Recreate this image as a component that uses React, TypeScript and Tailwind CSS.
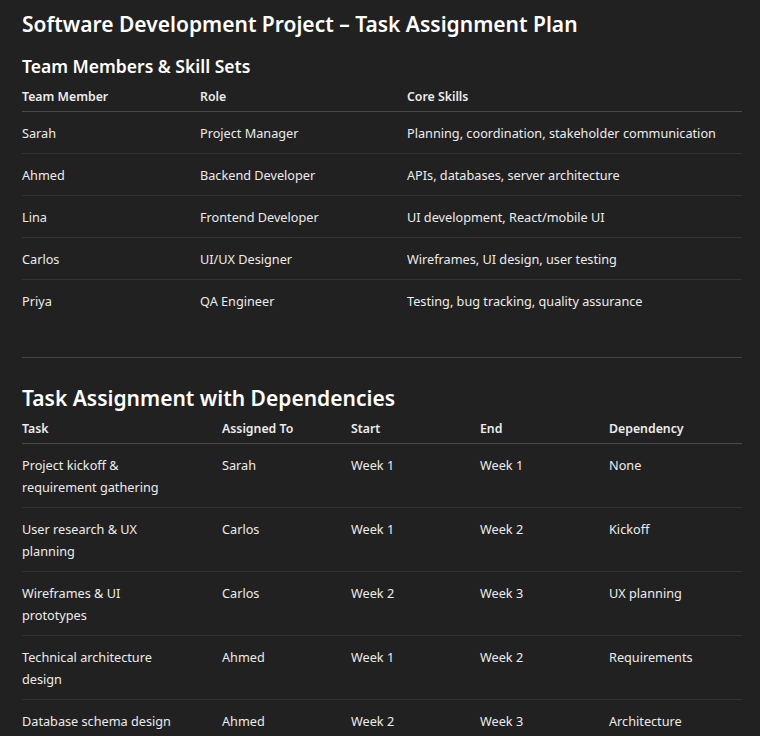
export default function App() {
  const team = [
    ["Sarah", "Project Manager", "Planning, coordination, stakeholder communication"],
    ["Ahmed", "Backend Developer", "APIs, databases, server architecture"],
    ["Lina", "Frontend Developer", "UI development, React/mobile UI"],
    ["Carlos", "UI/UX Designer", "Wireframes, UI design, user testing"],
    ["Priya", "QA Engineer", "Testing, bug tracking, quality assurance"],
  ];
  const tasks = [
    ["Project kickoff & requirement gathering", "Sarah", "Week 1", "Week 1", "None"],
    ["User research & UX planning", "Carlos", "Week 1", "Week 2", "Kickoff"],
    ["Wireframes & UI prototypes", "Carlos", "Week 2", "Week 3", "UX planning"],
    ["Technical architecture design", "Ahmed", "Week 1", "Week 2", "Requirements"],
    ["Database schema design", "Ahmed", "Week 2", "Week 3", "Architecture"],
    ["Frontend environment setup", "Lina", "Week 2", "Week 2", "Architecture"],
  ];
  return (
    <div className="min-h-[736px] bg-[#212121] text-[#ececec] px-[22px] pt-[8px] text-[12.7px] leading-[22px]" style={{ fontFamily: '"Noto Sans", sans-serif' }}>
      <h1 className="text-[21px] font-semibold leading-[32px] text-white">Software Development Project – Task Assignment Plan</h1>
      <h2 className="text-[17.5px] font-semibold leading-[28px] text-white mt-[12px]">Team Members &amp; Skill Sets</h2>
      <table className="w-[720px] mt-[6px] border-collapse table-fixed">
        <colgroup><col className="w-[178px]" /><col className="w-[207px]" /><col /></colgroup>
        <thead>
          <tr className="border-b border-[#4a4a4a] text-left text-[12.3px]">
            <th className="font-semibold pb-[3px] pt-0">Team Member</th>
            <th className="font-semibold pb-[3px]">Role</th>
            <th className="font-semibold pb-[3px]">Core Skills</th>
          </tr>
        </thead>
        <tbody>
          {team.map((r, i) => (
            <tr key={i} className={i < team.length - 1 ? "border-b border-[#333]" : ""}>
              {r.map((c, j) => <td key={j} className="py-[9.5px] align-top">{c}</td>)}
            </tr>
          ))}
        </tbody>
      </table>
      <div className="h-px bg-[#444] mt-[36px] w-[720px]" />
      <h2 className="text-[21px] font-semibold leading-[32px] text-white mt-[24px]">Task Assignment with Dependencies</h2>
      <table className="w-[720px] mt-[4px] border-collapse table-fixed">
        <colgroup><col className="w-[200px]" /><col className="w-[129px]" /><col className="w-[129px]" /><col className="w-[129px]" /><col /></colgroup>
        <thead>
          <tr className="border-b border-[#4a4a4a] text-left text-[12.3px]">
            <th className="font-semibold pb-[3px]">Task</th>
            <th className="font-semibold pb-[3px]">Assigned To</th>
            <th className="font-semibold pb-[3px]">Start</th>
            <th className="font-semibold pb-[3px]">End</th>
            <th className="font-semibold pb-[3px]">Dependency</th>
          </tr>
        </thead>
        <tbody>
          {tasks.map((r, i) => (
            <tr key={i} className="border-b border-[#333]">
              {r.map((c, j) => <td key={j} className={"py-[9.5px] align-top " + (j === 0 ? "pr-[40px]" : "")}>{c}</td>)}
            </tr>
          ))}
        </tbody>
      </table>
    </div>
  );
}
